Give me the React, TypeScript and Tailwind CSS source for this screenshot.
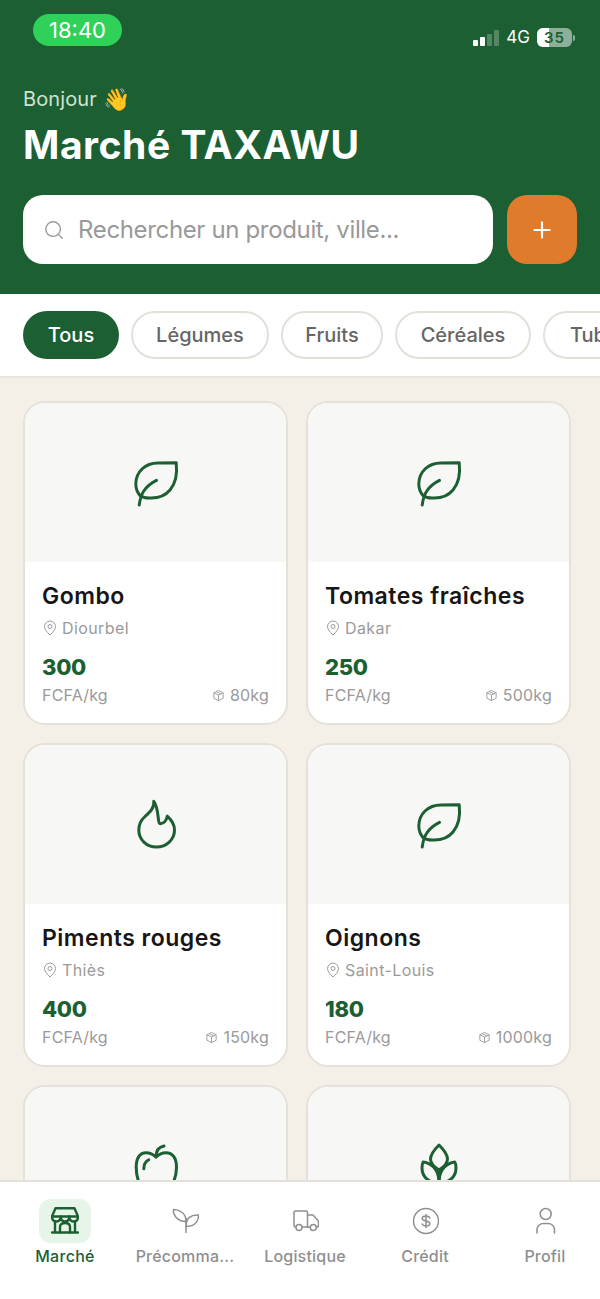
import React from 'react';
import { Search, Plus } from 'lucide-react';

type IconProps = { className?: string };

const LeafIcon = ({ className }: IconProps) => (
  <svg viewBox="0 0 48 48" fill="none" stroke="currentColor" strokeWidth="3" strokeLinecap="round" strokeLinejoin="round" className={className}>
    <path d="M44.2 3.7C45.5 15 44 24 38 31C33 37 25 39.5 17 39C13 39 10 38 8 36.5C5 33 3.8 29 3.8 25C3.8 13 13 4 26 4Z" />
    <path d="M7.2 46C8 40 9 36 11.8 32C15 27 19 24 24.5 21.3" />
  </svg>
);

const FlameIcon = ({ className }: IconProps) => (
  <svg viewBox="0 0 48 48" fill="none" stroke="currentColor" strokeWidth="3" strokeLinecap="round" strokeLinejoin="round" className={`overflow-visible ${className}`}>
    <path d="M21.8 0.300C22.5 7 18 11 13 15.500C9 19 6.800 24 6.800 29C6.800 38.500 14.500 46 24.500 46C34.500 46 42.500 38.500 42.500 29C42.500 24 39.500 19 35.200 15.200C35 19 32 22.700 28.500 22.700C25 22.700 27.500 8 21.800 0.300Z" />
  </svg>
);

const AppleIcon = ({ className }: IconProps) => (
  <svg viewBox="0 0 48 48" fill="none" stroke="currentColor" strokeWidth="3" strokeLinecap="round" strokeLinejoin="round" className={className}>
    <path d="M24 14C21 11 17 9.700 14 9.700C8 9.700 4.200 15 4.200 24C4.200 33 7 44 13 46C17 47 20 44 24 44C28 44 31 47 35 46C41 44 44.500 33 44.500 24C44.500 15 40.500 9.700 34 9.700C31 9.700 27 11 24 14Z" />
    <path d="M24 14C24 8 27 4 32 3" />
    <path d="M11.800 25.700C11.800 21.500 13.500 18.500 16.800 16.700" />
  </svg>
);

const GrainIcon = ({ className }: IconProps) => (
  <svg viewBox="0 0 48 48" fill="none" stroke="currentColor" strokeWidth="3" strokeLinecap="round" strokeLinejoin="round" className={className}>
    <path d="M24 2C19 7 15.500 11 15.500 16C15.500 20 19 24 24 27C29 24 32.500 20 32.500 16C32.500 11 29 7 24 2Z" />
    <path d="M24 46V27" />
    <path d="M24 40C14 40 7 34 7 25C7 22 7.500 20 8.200 19C16 20 24 26 24 40Z" />
    <path d="M24 40C34 40 41 34 41 25C41 22 40.500 20 39.800 19C32 20 24 26 24 40Z" />
  </svg>
);

const PinIcon = ({ className }: IconProps) => (
  <svg viewBox="0 0 16 16" fill="none" stroke="currentColor" strokeWidth="1" strokeLinejoin="round" className={className}>
    <path d="M8 15C5 12 2.500 9.500 2.500 6.500C2.500 3.500 5 1 8 1C11 1 13.500 3.500 13.500 6.500C13.500 9.500 11 12 8 15Z" />
    <circle cx="8" cy="6.500" r="2" />
  </svg>
);

const BoxIcon = ({ className }: IconProps) => (
  <svg viewBox="0 0 14 14" fill="none" stroke="currentColor" strokeWidth="1" strokeLinejoin="round" className={className}>
    <path d="M7 1.500L12 4V10L7 12.500L2 10V4Z" />
    <path d="M2 4L7 6.500L12 4M7 6.500V12.500M4.500 2.800L9.500 5.200" />
  </svg>
);

const StoreIcon = ({ className }: IconProps) => (
  <svg viewBox="0 0 28 28" fill="none" stroke="currentColor" strokeWidth="2.400" strokeLinecap="round" strokeLinejoin="round" className={className}>
    <path d="M4.500 1.300H23.500L27 9.500H1Z" />
    <path d="M1 9.500C1 13 3 14.500 5.300 14.500C7.500 14.500 9.700 13 9.700 9.500C9.700 13 11.800 14.500 14 14.500C16.200 14.500 18.300 13 18.300 9.500C18.300 13 20.500 14.500 22.700 14.500C25 14.500 27 13 27 9.500" />
    <path d="M4 14.500V25.500M24 14.500V25.500M1 25.500H27" />
    <path d="M9 25.500V20C9 17.500 11 16 14 16C17 16 19 17.500 19 20V25.500" />
  </svg>
);

const SproutIcon = ({ className }: IconProps) => (
  <svg viewBox="0 0 28 28" fill="none" stroke="currentColor" strokeWidth="1.500" strokeLinecap="round" strokeLinejoin="round" className={className}>
    <path d="M15 25.500V11.500" />
    <path d="M15 14.500C15 8 11 3 2.500 2.500C2 8 6 14.500 15 14.500Z" />
    <path d="M15 19.500C21.500 19.500 27.500 16.500 27.500 8C20 7.500 15 11 15 19.500Z" />
  </svg>
);

const TruckIcon = ({ className }: IconProps) => (
  <svg viewBox="0 0 28 28" fill="none" stroke="currentColor" strokeWidth="1.500" strokeLinecap="round" strokeLinejoin="round" className={className}>
    <path d="M5 20H4.500C3.500 20 3 19.500 3 18.500V5.500C3 4.500 3.500 4 4.500 4H15C16 4 16.500 4.500 16.500 5.500V20H11" />
    <path d="M16.500 8H22L27.500 14V18.500C27.500 19.500 27 20 26 20H25.500M19.300 20H16.500" />
    <circle cx="8" cy="20.500" r="3" />
    <circle cx="22.300" cy="20.500" r="3" />
  </svg>
);

const DollarIcon = ({ className }: IconProps) => (
  <svg viewBox="0 0 28 28" fill="none" stroke="currentColor" strokeWidth="1.500" strokeLinecap="round" strokeLinejoin="round" className={className}>
    <circle cx="15" cy="14" r="12.500" />
    <path d="M18.800 11C18.300 9.700 17 9 15 9C13 9 11.200 9.900 11.200 11.500C11.200 15 18.800 13 18.800 16.500C18.800 18.100 17 19 15 19C13 19 11.700 18.300 11.200 17M15 7.500V20.500" />
  </svg>
);

const UserIcon = ({ className }: IconProps) => (
  <svg viewBox="0 0 28 28" fill="none" stroke="currentColor" strokeWidth="1.500" strokeLinecap="round" strokeLinejoin="round" className={className}>
    <circle cx="14.700" cy="7" r="5.500" />
    <path d="M6 26V22.500C6 19 9 16.500 12.500 16.500H17C20.500 16.500 23.500 19 23.500 22.500V26" />
  </svg>
);

const categories = [
  { label: 'Légumes', width: 'w-[138px]' },
  { label: 'Fruits', width: 'w-[102px]' },
  { label: 'Céréales', width: 'w-[136px]' },
  { label: 'Tubercules', width: 'w-[160px]' },
];

const products = [
  { icon: LeafIcon, name: 'Gombo', city: 'Diourbel', price: '300', stock: '80kg' },
  { icon: LeafIcon, name: 'Tomates fraîches', city: 'Dakar', price: '250', stock: '500kg' },
  { icon: FlameIcon, name: 'Piments rouges', city: 'Thiès', price: '400', stock: '150kg' },
  { icon: LeafIcon, name: 'Oignons', city: 'Saint-Louis', price: '180', stock: '1000kg' },
];

const navItems = [
  { icon: SproutIcon, label: 'Précomma...' },
  { icon: TruckIcon, label: 'Logistique' },
  { icon: DollarIcon, label: 'Crédit' },
  { icon: UserIcon, label: 'Profil' },
];

const StatusBar = () => (
  <div className="flex h-[46px] items-start justify-between pl-[33px] pr-[25px] pt-[14px]">
    <div className="flex h-[32px] w-[89px] items-center justify-center rounded-full bg-[#30d158] text-[22px] text-white">18:40</div>
    <div className="mt-[11px] flex items-center">
      <div className="flex items-end gap-[2px]">
        <span className="h-[6px] w-[5px] rounded-[1px] bg-white" />
        <span className="h-[9px] w-[5px] rounded-[1px] bg-white" />
        <span className="h-[12px] w-[5px] rounded-[1px] bg-white/25" />
        <span className="h-[16px] w-[5px] rounded-[1px] bg-white/25" />
      </div>
      <span className="ml-[7px] text-[17px] text-white">4G</span>
      <div className="relative ml-[7px] flex h-[19px] w-[35px] overflow-hidden rounded-[6px] bg-white/50">
        <span className="h-full w-[12px] bg-white" />
        <span className="absolute inset-0 flex items-center justify-center text-[15px] font-semibold tracking-[1px] text-[#1c5f32]">35</span>
      </div>
      <span className="ml-[1px] h-[6px] w-[2px] rounded-r-full bg-white/50" />
    </div>
  </div>
);

const ProductCard = ({ icon: Icon, name, city, price, stock }: (typeof products)[number]) => (
  <div className="h-[324px] overflow-hidden rounded-[22px] border-2 border-[#e6e1d8] bg-white">
    <div className="flex h-[159px] items-center justify-center bg-[#f7f7f5]">
      <Icon className="h-[48px] w-[48px] text-[#1c5f32]" />
    </div>
    <div className="px-[17px] pt-[18px]">
      <div className="text-[23px] font-semibold leading-[32px] tracking-[0.5px] text-[#161616]">{name}</div>
      <div className="mt-[4px] flex h-[24px] items-center gap-[4px] text-[#9a9a9a]">
        <PinIcon className="h-[16px] w-[16px]" />
        <span className="text-[16px] tracking-[0.4px]">{city}</span>
      </div>
      <div className="mt-[13px] text-[22px] font-extrabold leading-[28px] tracking-[-0.3px] text-[#1c5f32]">{price}</div>
      <div className="mt-[2px] flex items-center justify-between text-[16px] leading-[24px] tracking-[0.2px] text-[#9a9a9a]">
        <span>FCFA/kg</span>
        <span className="flex items-center gap-[5px]">
          <BoxIcon className="h-[13px] w-[13px]" />
          {stock}
        </span>
      </div>
    </div>
  </div>
);

const TopOnlyCard = ({ icon: Icon }: { icon: React.FC<IconProps> }) => (
  <div className="h-[324px] overflow-hidden rounded-[22px] border-2 border-[#e6e1d8] bg-white">
    <div className="flex h-[159px] items-center justify-center bg-[#f7f7f5]">
      <Icon className="h-[48px] w-[48px] text-[#1c5f32]" />
    </div>
  </div>
);

export default function App() {
  return (
    <div className="flex h-[1299px] w-[600px] flex-col overflow-hidden bg-white font-['Inter',sans-serif]">
      <header className="h-[294px] shrink-0 bg-[#1c5f32]">
        <StatusBar />
        <div className="px-[23px] pt-[39px]">
          <div className="flex h-[28px] items-center text-[20px] tracking-[0.1px] text-[#cfe3d4]">
            Bonjour <span className="ml-[6px] text-[22px]">👋</span>
          </div>
          <h1 className="mt-[8px] text-[39px] font-bold leading-[48px] tracking-[0.55px] text-white">Marché TAXAWU</h1>
          <div className="mt-[26px] flex gap-[14px]">
            <div className="flex h-[69px] w-[470px] items-center rounded-[20px] bg-white pl-[20px]">
              <Search className="h-[22px] w-[22px] text-[#999999]" strokeWidth={1.5} />
              <span className="ml-[13px] text-[24px] tracking-[-0.35px] text-[#999999]">Rechercher un produit, ville...</span>
            </div>
            <div className="flex h-[69px] w-[70px] items-center justify-center rounded-[20px] bg-[#e07b2c]">
              <Plus className="h-[26px] w-[26px] text-white" strokeWidth={2} />
            </div>
          </div>
        </div>
      </header>

      <div className="flex h-[84px] shrink-0 items-center gap-[12px] overflow-hidden border-b-2 border-[#e9e5dd] pl-[23px]">
        <div className="flex h-[48px] w-[96px] shrink-0 items-center justify-center rounded-full bg-[#1c5f32] text-[20px] font-medium text-white">Tous</div>
        {categories.map((c) => (
          <div key={c.label} className={`flex h-[48px] shrink-0 items-center justify-center rounded-full border-2 border-[#e3e0da] text-[20px] font-medium text-[#666666] ${c.width}`}>
            {c.label}
          </div>
        ))}
      </div>

      <main className="min-h-0 flex-1 overflow-hidden bg-[#f4f0e8]">
        <div className="grid grid-cols-[265px_265px] gap-[18px] pl-[23px] pt-[23px]">
          {products.map((p) => (
            <ProductCard key={p.name} {...p} />
          ))}
          <TopOnlyCard icon={AppleIcon} />
          <TopOnlyCard icon={GrainIcon} />
        </div>
      </main>

      <nav className="flex h-[119px] shrink-0 overflow-hidden border-t-2 border-[#e3e0da] bg-white pl-[5px]">
        <div className="flex w-[120px] shrink-0 flex-col items-center pt-[17px]">
          <div className="flex h-[44px] w-[52px] items-center justify-center rounded-[12px] bg-[#e7f4e8]">
            <StoreIcon className="h-[28px] w-[28px] text-[#1c5f32]" />
          </div>
          <span className="mt-[1px] text-[16px] font-medium leading-[24px] tracking-[0.3px] text-[#1c5f32]">Marché</span>
        </div>
        {navItems.map(({ icon: Icon, label }) => (
          <div key={label} className="flex w-[120px] shrink-0 flex-col items-center pt-[17px]">
            <div className="flex h-[44px] w-[52px] items-center justify-center">
              <Icon className="h-[28px] w-[28px] text-[#8f8f8f]" />
            </div>
            <span className="mt-[1px] text-[16px] font-medium leading-[24px] tracking-[0.2px] text-[#8f8f8f]">{label}</span>
          </div>
        ))}
      </nav>
    </div>
  );
}
